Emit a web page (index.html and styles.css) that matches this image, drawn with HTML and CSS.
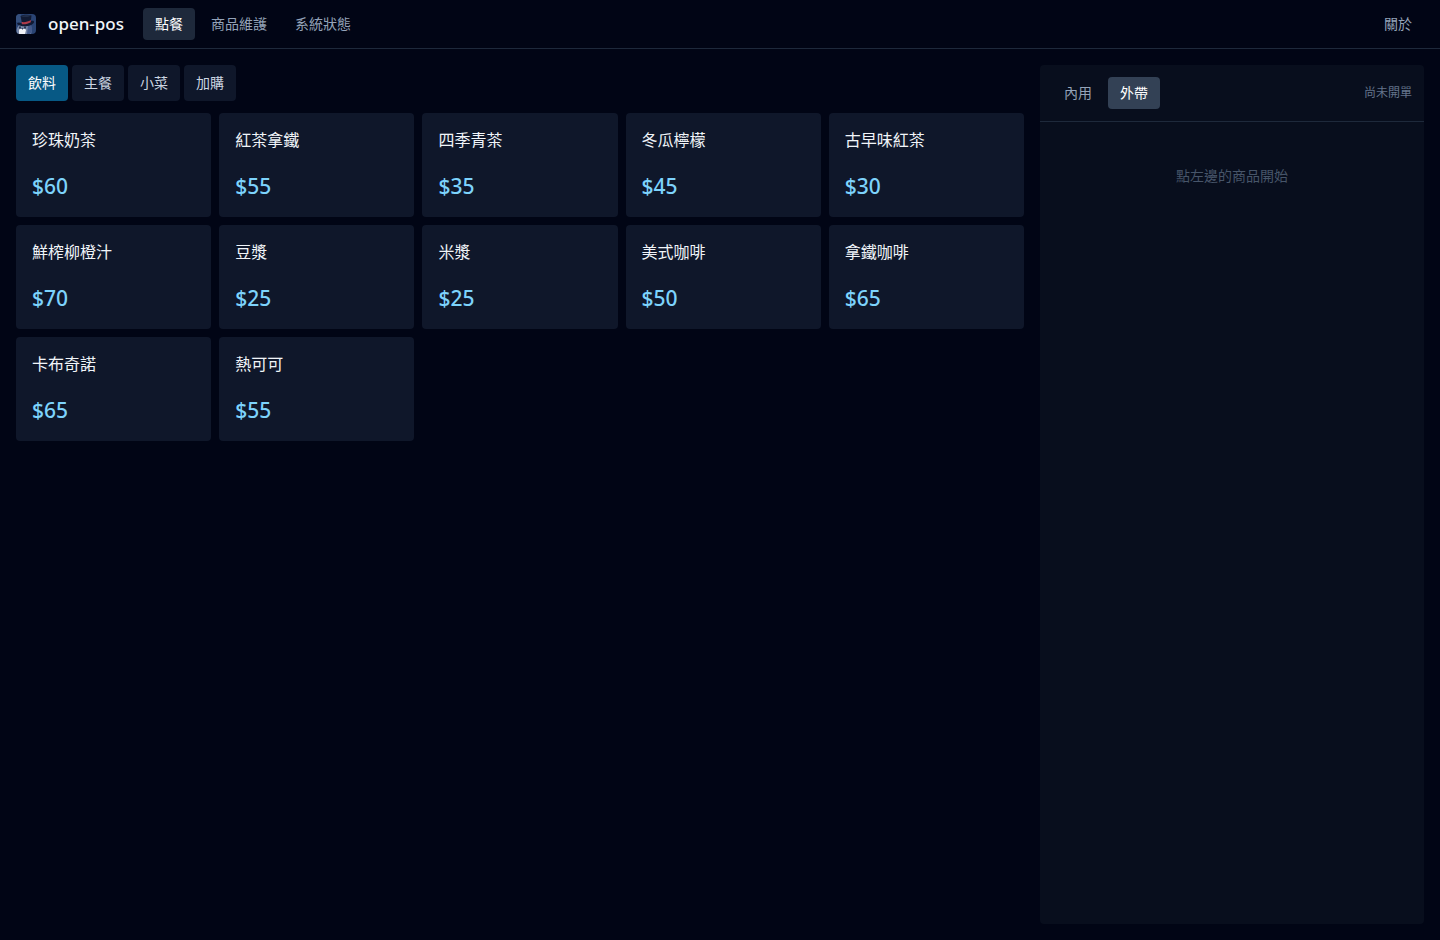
FILE: index.html
```html
<!DOCTYPE html>
<html lang="zh-Hant">
<head>
<meta charset="utf-8">
<meta name="viewport" content="width=device-width, initial-scale=1">
<title>open-pos</title>
<link rel="stylesheet" href="styles.css">
</head>
<body>
<header class="topbar">
  <svg class="logo" viewBox="0 0 20 20" aria-hidden="true">
    <defs><clipPath id="logo-clip"><rect width="20" height="20" rx="4"/></clipPath></defs>
    <g clip-path="url(#logo-clip)">
      <rect width="20" height="20" fill="#2a4474"/>
      <path d="M0 0h5v8H0z" fill="#35507e"/>
      <path d="M1 20c-1-4 0-8 3-9h9c3 2 3 6 2 9z" fill="#7484a5"/>
      <path d="M12 11h3c2 3 1 7-1 9h-3z" fill="#43598a"/>
      <path d="M3 16c1-2 2-1 3-1s3-1 4 1l-1 4H3z" fill="#f1f2f7"/>
      <path d="M3 12.500h2v2H3zM8 12.500h2v2H8z" fill="#2a3654"/>
      <path d="M5.500 14h2l-1 2z" fill="#354260"/>
      <path d="M4.500 2c3-1.500 8-1.500 11-.500L14.500 9c-3 2-5 2-8 2z" fill="#111a33"/>
      <path d="M5 2.200c3-1 7-1 10-.700-2 1.500-7 1.500-10 .700z" fill="#263552"/>
      <path d="M1 10c0-1.500 3-1.500 5-.500 4 0 7-1 9-2.500 2-.500 3.500 0 3 1.500-2 4-12 5.500-17 1.500z" fill="#101a34"/>
      <path d="M5.500 8c3.500.500 6.500-.300 9.300-2v2.200c-2.500 1.500-5.500 2.300-8.800 2z" fill="#b03b4a"/>
    </g>
  </svg>
  <span class="brand">open-pos</span>
  <nav class="nav">
    <button class="btn btn-nav is-active" type="button">點餐</button>
    <button class="btn btn-nav" type="button">商品維護</button>
    <button class="btn btn-nav" type="button">系統狀態</button>
  </nav>
  <button class="btn btn-nav about" type="button">關於</button>
</header>
<main class="layout">
  <section class="menu">
    <div class="tabs">
      <button class="btn tab is-selected" type="button">飲料</button>
      <button class="btn tab" type="button">主餐</button>
      <button class="btn tab" type="button">小菜</button>
      <button class="btn tab" type="button">加購</button>
    </div>
    <div class="products">
      <button class="product" type="button"><span class="name">珍珠奶茶</span><span class="price">$60</span></button>
      <button class="product" type="button"><span class="name">紅茶拿鐵</span><span class="price">$55</span></button>
      <button class="product" type="button"><span class="name">四季青茶</span><span class="price">$35</span></button>
      <button class="product" type="button"><span class="name">冬瓜檸檬</span><span class="price">$45</span></button>
      <button class="product" type="button"><span class="name">古早味紅茶</span><span class="price">$30</span></button>
      <button class="product" type="button"><span class="name">鮮榨柳橙汁</span><span class="price">$70</span></button>
      <button class="product" type="button"><span class="name">豆漿</span><span class="price">$25</span></button>
      <button class="product" type="button"><span class="name">米漿</span><span class="price">$25</span></button>
      <button class="product" type="button"><span class="name">美式咖啡</span><span class="price">$50</span></button>
      <button class="product" type="button"><span class="name">拿鐵咖啡</span><span class="price">$65</span></button>
      <button class="product" type="button"><span class="name">卡布奇諾</span><span class="price">$65</span></button>
      <button class="product" type="button"><span class="name">熱可可</span><span class="price">$55</span></button>
    </div>
  </section>
  <aside class="order">
    <div class="order-head">
      <button class="btn btn-mode" type="button">內用</button>
      <button class="btn btn-mode is-chosen" type="button">外帶</button>
      <span class="order-status">尚未開單</span>
    </div>
    <p class="order-empty">點左邊的商品開始</p>
  </aside>
</main>
</body>
</html>
```
FILE: styles.css
```css
*, *::before, *::after { box-sizing: border-box; }

body {
  margin: 0;
  min-height: 100vh;
  display: flex;
  flex-direction: column;
  background: #010515;
  color: #f1f5f9;
  font-family: "Noto Sans", "Noto Sans CJK TC", sans-serif;
  font-size: 16px;
  line-height: 24px;
}

button { font: inherit; color: inherit; border: 0; cursor: pointer; }

.topbar {
  display: flex;
  align-items: center;
  padding: 8px 16px;
  border-bottom: 1px solid #1e293b;
}

.logo { width: 20px; height: 20px; }
.brand { margin: 0 19px 0 12px; font-size: 17px; font-weight: 500; }
.nav { display: flex; gap: 4px; }
.about { margin-left: auto; }

.btn {
  padding: 6px 12px;
  border-radius: 4px;
  background: transparent;
  font-size: 14px;
  line-height: 20px;
}

.btn-nav { color: #94a3b8; }
.btn-nav.is-active { background: #1e293b; color: #ffffff; }

.layout {
  flex: 1;
  display: grid;
  grid-template-columns: minmax(0, 1fr) 384px;
  gap: 16px;
  padding: 16px;
}

.menu { display: flex; flex-direction: column; gap: 12px; }
.tabs { display: flex; gap: 4px; }
.tab { padding: 8px 12px; background: #0f172a; color: #cbd5e1; }
.tab.is-selected { background: #075985; color: #ffffff; }

.products { display: grid; grid-template-columns: repeat(5, minmax(0, 1fr)); gap: 8px; }

.product {
  display: flex;
  flex-direction: column;
  gap: 22px;
  padding: 16px 16px 18px;
  border-radius: 4px;
  background: #0f172a;
  text-align: left;
}

.name { line-height: 22px; }
.price { color: #7dd3fc; font-size: 21px; font-weight: 500; line-height: 26px; }

.order { border-radius: 4px; background: #080e1d; }

.order-head {
  display: flex;
  align-items: center;
  gap: 4px;
  padding: 12px;
  border-bottom: 1px solid #1e293b;
}

.btn-mode { color: #94a3b8; }
.btn-mode.is-chosen { background: #334155; color: #ffffff; }
.order-status { margin-left: auto; color: #64748b; font-size: 12px; line-height: 16px; }

.order-empty {
  margin: 0;
  padding: 44px 12px;
  color: #475569;
  font-size: 14px;
  line-height: 20px;
  text-align: center;
}
```
